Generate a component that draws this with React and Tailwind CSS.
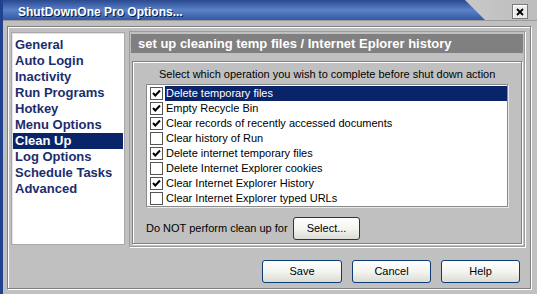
import React from 'react';

const MENU = ['General', 'Auto Login', 'Inactivity', 'Run Programs', 'Hotkey', 'Menu Options', 'Clean Up', 'Log Options', 'Schedule Tasks', 'Advanced'];

const OPS = [
  { label: 'Delete temporary files', on: true },
  { label: 'Empty Recycle Bin', on: true },
  { label: 'Clear records of recently accessed documents', on: true },
  { label: 'Clear history of Run', on: false },
  { label: 'Delete internet temporary files', on: true },
  { label: 'Delete Internet Explorer cookies', on: false },
  { label: 'Clear Internet Explorer History', on: true },
  { label: 'Clear Internet Explorer typed URLs', on: false },
];

function Check({ on }) {
  return (
    <span className="w-[13px] h-[13px] shrink-0 bg-white border border-[#555] flex items-center justify-center">
      {on && (
        <svg width="9" height="9" viewBox="0 0 9 9">
          <path d="M1 4 L3.3 6.5 L8 1.5" stroke="#000" strokeWidth="2" fill="none" />
        </svg>
      )}
    </span>
  );
}

function XpButton({ children, className = '' }) {
  return (
    <button className={`h-[23px] rounded-[3px] border border-[#0c3c74] bg-gradient-to-b from-white via-[#f4f4f0] to-[#dcdcd6] text-[11px] text-black ${className}`}>
      {children}
    </button>
  );
}

export default function App() {
  return (
    <div className="w-[537px] h-[294px] bg-[#c0c0c0] border-l-[3px] border-[#22418f] flex flex-col overflow-hidden" style={{ fontFamily: '"Liberation Sans", Arial, sans-serif' }}>
      {/* title bar */}
      <div className="relative h-[21px] shrink-0 bg-gradient-to-r from-[#c4c4c4] via-[#e6e6e6] to-[#bdbdbd] border-b border-[#9a9a9a]">
        <div className="absolute inset-0 bg-gradient-to-b from-[#2a4890] via-[#5a82c6] to-[#3459a8] [clip-path:polygon(0_0,462px_0,482px_100%,0_100%)]" />
        <span className="absolute left-[15px] top-[3px] text-[12px] font-bold text-white [text-shadow:1px_1px_0_#0a1c50]">ShutDownOne Pro Options...</span>
        <span className="absolute left-[509px] top-[4px] w-[16px] h-[15px] bg-[#ececec] border border-[#7a7a7a] shadow-[inset_1px_1px_0_white] flex items-center justify-center">
          <svg width="8" height="8" viewBox="0 0 8 8">
            <path d="M1 1 L7 7 M7 1 L1 7" stroke="#000" strokeWidth="1.8" />
          </svg>
        </span>
      </div>

      {/* body */}
      <div className="flex-1 ml-[4px] mr-[6px] mt-[5px] mb-[5px] border border-[#808080] shadow-[inset_1px_1px_0_white,1px_1px_0_white] flex flex-col">
        <div className="flex pl-[3px] pt-[5px] gap-[4px]">
          {/* menu list */}
          <div className="w-[114px] h-[213px] bg-white border border-[#a8a8a8] shadow-[inset_1px_1px_0_#e4e4e4] pt-[4px] px-px">
            {MENU.map((m) => (
              <div
                key={m}
                className={`h-[16px] leading-[16px] pl-[2px] text-[13px] font-bold ${m === 'Clean Up' ? 'bg-[#0a246a] text-white' : 'text-[#1b2d6e]'}`}
              >
                {m}
              </div>
            ))}
          </div>

          {/* right panel */}
          <div className="w-[396px] h-[216px] -mt-px border border-[#9c9c9c] shadow-[1px_1px_0_white] p-px flex flex-col">
            <div className="h-[19px] mt-px bg-[#808080] text-white text-[13px] font-bold leading-[19px] pl-[7px]">
              set up cleaning temp files / Internet Eplorer history
            </div>
            <div className="flex-1 mt-[8px] mx-px mb-px border border-[#808080] shadow-[inset_1px_1px_0_white,1px_1px_0_white] flex flex-col px-[13px]">
              <div className="text-[11px] text-black pl-[13px] pt-[4px] h-[22px]">
                Select which operation you wish to complete before shut down action
              </div>
              <div className="h-[123px] bg-white border border-[#8a8a8a] shadow-[1px_1px_0_#e8e8e8] pt-px">
                {OPS.map((o, i) => (
                  <div key={o.label} className="h-[15px] flex items-center pl-[3px] gap-[2px]">
                    <Check on={o.on} />
                    <span className={`flex-1 h-[15px] leading-[15px] text-[11px] pl-px ${i === 0 ? 'bg-[#0a246a] text-white' : 'text-black'}`}>
                      {o.label}
                    </span>
                  </div>
                ))}
              </div>
              <div className="flex items-center mt-[10px]">
                <span className="text-[11px] text-black w-[147px]">Do NOT perform clean up for</span>
                <XpButton className="w-[67px]">Select...</XpButton>
              </div>
            </div>
          </div>
        </div>

        <div className="flex-1 flex items-end justify-end gap-[10px] pr-[10px] pb-[5px]">
          <XpButton className="w-[80px]">Save</XpButton>
          <XpButton className="w-[79px]">Cancel</XpButton>
          <XpButton className="w-[79px]">Help</XpButton>
        </div>
      </div>
    </div>
  );
}
